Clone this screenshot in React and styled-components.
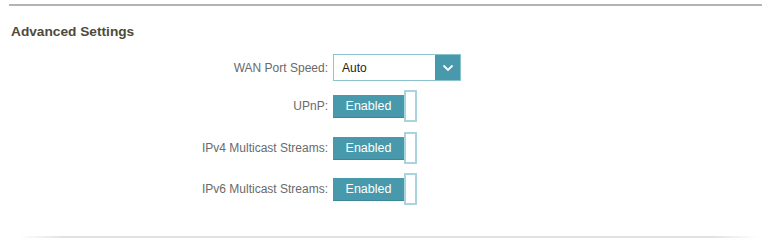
import React, { useState } from 'react'
import styled, { createGlobalStyle } from 'styled-components'

const GlobalStyle = createGlobalStyle`
  html, body {
    margin: 0;
    padding: 0;
    background: #fff;
    font-family: "Liberation Sans", Arial, sans-serif;
  }
`

const Card = styled.section`
  margin: 4px 6px 0 9px;
  border-top: 2px solid #b4b4b4;
  width: 753px;
  box-sizing: border-box;
`

const Title = styled.h2`
  margin: 18px 0 0 2px;
  font-size: 13.7px;
  line-height: 15px;
  font-weight: bold;
  color: #4e4a3c;
`

const Form = styled.div`
  display: flex;
  flex-direction: column;
  margin-top: 15px;
`

const Row = styled.div`
  display: grid;
  grid-template-columns: 319px auto;
  column-gap: 5px;
  align-items: center;
  height: ${p => p.h}px;
  margin-bottom: ${p => p.mb}px;
`

const Label = styled.label`
  text-align: right;
  font-size: 12px;
  color: #6a6a6a;
`

const Select = styled.div`
  display: flex;
  width: 128px;
  height: 27px;
  box-sizing: border-box;
  border: 1px solid #8cc3d0;
`

const SelectValue = styled.span`
  flex: 1;
  display: flex;
  align-items: center;
  padding-left: 8px;
  font-size: 12px;
  color: #222;
`

const SelectButton = styled.span`
  width: 25px;
  background: #4899ab;
  display: flex;
  align-items: center;
  justify-content: center;
`

const Toggle = styled.button`
  display: flex;
  align-items: center;
  padding: 0;
  border: none;
  background: none;
  cursor: pointer;
  font-family: inherit;
`

const ToggleFace = styled.span`
  width: 71px;
  height: 23px;
  box-sizing: border-box;
  background: ${p => (p.on ? '#4899ab' : '#9a9a9a')};
  border-bottom: 1px solid ${p => (p.on ? '#3d8798' : '#888')};
  color: #fff;
  font-size: 12.5px;
  display: flex;
  align-items: center;
  justify-content: center;
`

const Knob = styled.span`
  width: 13px;
  height: 32px;
  box-sizing: border-box;
  border: 2px solid #a9d4de;
  background: #fff;
`

const Divider = styled.div`
  height: 2px;
  margin: 31px 4px 0 10px;
  background: linear-gradient(to right, rgba(220,220,220,0), #e2e2e2 6%, #e2e2e2 94%, rgba(220,220,220,0));
`

const Chevron = () => (
  <svg width="12" height="8" viewBox="0 0 12 8">
    <path d="M1.5 1.5 L6 6 L10.5 1.5" fill="none" stroke="#fff" strokeWidth="1.8" />
  </svg>
)

const Switch = ({ value, onChange }) => (
  <Toggle onClick={() => onChange(!value)}>
    <ToggleFace on={value ? 1 : 0}>{value ? 'Enabled' : 'Disabled'}</ToggleFace>
    <Knob />
  </Toggle>
)

export default function App() {
  const [flags, setFlags] = useState({ upnp: true, ipv4: true, ipv6: true })
  const set = key => v => setFlags({ ...flags, [key]: v })

  return (
    <>
      <GlobalStyle />
      <Card>
        <Title>Advanced Settings</Title>
        <Form>
          <Row h={27} mb={9}>
            <Label>WAN Port Speed:</Label>
            <Select>
              <SelectValue>Auto</SelectValue>
              <SelectButton><Chevron /></SelectButton>
            </Select>
          </Row>
          <Row h={32} mb={10}>
            <Label>UPnP:</Label>
            <Switch value={flags.upnp} onChange={set('upnp')} />
          </Row>
          <Row h={32} mb={9}>
            <Label>IPv4 Multicast Streams:</Label>
            <Switch value={flags.ipv4} onChange={set('ipv4')} />
          </Row>
          <Row h={32} mb={0}>
            <Label>IPv6 Multicast Streams:</Label>
            <Switch value={flags.ipv6} onChange={set('ipv6')} />
          </Row>
        </Form>
        <Divider />
      </Card>
    </>
  )
}
